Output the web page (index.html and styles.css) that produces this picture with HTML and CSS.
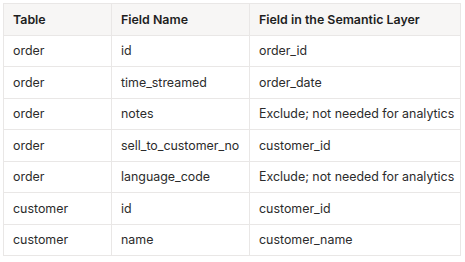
FILE: index.html
```html
<!DOCTYPE html>
<html lang="en">
<head>
  <meta charset="UTF-8" />
  <title>Semantic Layer Mapping</title>
  <link rel="stylesheet" href="styles.css">
</head>
<body>
  <table class="map-table">
    <colgroup>
      <col class="col-table" />
      <col class="col-field" />
      <col class="col-semantic" />
    </colgroup>
    <thead>
      <tr>
        <th>Table</th>
        <th>Field Name</th>
        <th>Field in the Semantic Layer</th>
      </tr>
    </thead>
    <tbody>
      <tr><td>order</td><td>id</td><td>order_id</td></tr>
      <tr><td>order</td><td>time_streamed</td><td>order_date</td></tr>
      <tr><td>order</td><td>notes</td><td>Exclude; not needed for analytics</td></tr>
      <tr><td>order</td><td>sell_to_customer_no</td><td>customer_id</td></tr>
      <tr><td>order</td><td>language_code</td><td>Exclude; not needed for analytics</td></tr>
      <tr><td>customer</td><td>id</td><td>customer_id</td></tr>
      <tr><td>customer</td><td>name</td><td>customer_name</td></tr>
    </tbody>
  </table>
</body>
</html>
```

FILE: styles.css
```css
/* Basic Resets */
* { margin: 0; padding: 0; box-sizing: border-box; }
body {
  background: #fff;
  color: #2b2b2b;
  font-family: Inter, "Noto Sans", sans-serif;
  font-size: 12.4px;
  padding: 3px 0 0 3px;
}

/* Mapping table */
.map-table {
  border-collapse: collapse;
  table-layout: fixed;
  width: 457px;
}
.col-table { width: 108px; }
.col-field { width: 138px; }
.col-semantic { width: 211px; }

.map-table th,
.map-table td {
  border: 1px solid #e9e7e6;
  height: 31.5px;
  padding: 0 9px;
  text-align: left;
  vertical-align: middle;
  white-space: nowrap;
}
.map-table th {
  background: #f7f6f5;
  color: #1e1e1e;
  font-weight: 600;
}
```
